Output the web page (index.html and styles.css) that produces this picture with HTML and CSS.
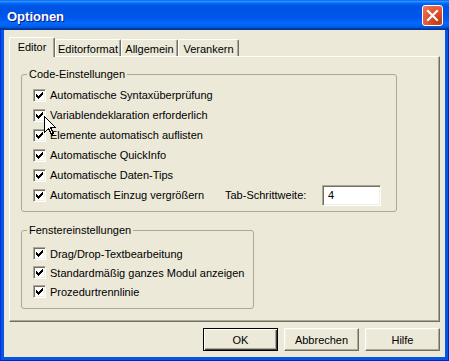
FILE: index.html
```html
<!DOCTYPE html>
<html lang="de">
<head>
<meta charset="utf-8">
<title>Optionen</title>
<link rel="stylesheet" href="styles.css">
</head>
<body>
<div class="window">
  <div class="titlebar">
    <span class="title">Optionen</span>
    <span class="close"><svg width="19" height="19" viewBox="0 0 19 19"><path d="M5 5 L14 14 M14 5 L5 14" stroke="#fff" stroke-width="2.2" stroke-linecap="square" fill="none"/></svg></span>
  </div>
  <div class="frame">
    <div class="client">
      <div class="tabs">
        <div class="tab active w1">Editor</div>
        <div class="tab w2">Editorformat</div>
        <div class="tab w3">Allgemein</div>
        <div class="tab w4">Verankern</div>
      </div>
      <div class="panel">
        <fieldset class="group g1">
          <legend>Code-Einstellungen</legend>
          <div class="row"><span class="cb"><svg width="11" height="11" viewBox="0 0 11 11"><path d="M2 4h1v3h-1z M3 5h1v3h-1z M4 6h1v3h-1z M5 5h1v3h-1z M6 4h1v3h-1z M7 3h1v3h-1z M8 2h1v3h-1z" fill="#000" shape-rendering="crispEdges"/></svg></span><span>Automatische Syntaxüberprüfung</span></div>
          <div class="row"><span class="cb"><svg width="11" height="11" viewBox="0 0 11 11"><path d="M2 4h1v3h-1z M3 5h1v3h-1z M4 6h1v3h-1z M5 5h1v3h-1z M6 4h1v3h-1z M7 3h1v3h-1z M8 2h1v3h-1z" fill="#000" shape-rendering="crispEdges"/></svg></span><span>Variablendeklaration erforderlich</span></div>
          <div class="row"><span class="cb"><svg width="11" height="11" viewBox="0 0 11 11"><path d="M2 4h1v3h-1z M3 5h1v3h-1z M4 6h1v3h-1z M5 5h1v3h-1z M6 4h1v3h-1z M7 3h1v3h-1z M8 2h1v3h-1z" fill="#000" shape-rendering="crispEdges"/></svg></span><span>Elemente automatisch auflisten</span></div>
          <div class="row"><span class="cb"><svg width="11" height="11" viewBox="0 0 11 11"><path d="M2 4h1v3h-1z M3 5h1v3h-1z M4 6h1v3h-1z M5 5h1v3h-1z M6 4h1v3h-1z M7 3h1v3h-1z M8 2h1v3h-1z" fill="#000" shape-rendering="crispEdges"/></svg></span><span>Automatische QuickInfo</span></div>
          <div class="row"><span class="cb"><svg width="11" height="11" viewBox="0 0 11 11"><path d="M2 4h1v3h-1z M3 5h1v3h-1z M4 6h1v3h-1z M5 5h1v3h-1z M6 4h1v3h-1z M7 3h1v3h-1z M8 2h1v3h-1z" fill="#000" shape-rendering="crispEdges"/></svg></span><span>Automatische Daten-Tips</span></div>
          <div class="row"><span class="cb"><svg width="11" height="11" viewBox="0 0 11 11"><path d="M2 4h1v3h-1z M3 5h1v3h-1z M4 6h1v3h-1z M5 5h1v3h-1z M6 4h1v3h-1z M7 3h1v3h-1z M8 2h1v3h-1z" fill="#000" shape-rendering="crispEdges"/></svg></span><span class="longlabel">Automatisch Einzug vergrößern</span><span class="tablabel">Tab-Schrittweite:</span><span class="input">4</span></div>
        </fieldset>
        <fieldset class="group g2">
          <legend>Fenstereinstellungen</legend>
          <div class="row"><span class="cb"><svg width="11" height="11" viewBox="0 0 11 11"><path d="M2 4h1v3h-1z M3 5h1v3h-1z M4 6h1v3h-1z M5 5h1v3h-1z M6 4h1v3h-1z M7 3h1v3h-1z M8 2h1v3h-1z" fill="#000" shape-rendering="crispEdges"/></svg></span><span>Drag/Drop-Textbearbeitung</span></div>
          <div class="row"><span class="cb"><svg width="11" height="11" viewBox="0 0 11 11"><path d="M2 4h1v3h-1z M3 5h1v3h-1z M4 6h1v3h-1z M5 5h1v3h-1z M6 4h1v3h-1z M7 3h1v3h-1z M8 2h1v3h-1z" fill="#000" shape-rendering="crispEdges"/></svg></span><span>Standardmäßig ganzes Modul anzeigen</span></div>
          <div class="row"><span class="cb"><svg width="11" height="11" viewBox="0 0 11 11"><path d="M2 4h1v3h-1z M3 5h1v3h-1z M4 6h1v3h-1z M5 5h1v3h-1z M6 4h1v3h-1z M7 3h1v3h-1z M8 2h1v3h-1z" fill="#000" shape-rendering="crispEdges"/></svg></span><span>Prozedurtrennlinie</span></div>
        </fieldset>
      </div>
      <div class="buttons">
        <span class="btn default">OK</span>
        <span class="btn">Abbrechen</span>
        <span class="btn">Hilfe</span>
      </div>
    </div>
  </div>
  <svg class="cursor" width="13" height="20" viewBox="0 0 13 20"><path d="M0.5 0.5 L0.5 16.5 L4.5 12.5 L7.5 18.5 L9.5 17.5 L6.5 11.5 L11.5 11.5 Z" fill="#fff" stroke="#000" stroke-width="1" shape-rendering="crispEdges"/></svg>
</div>
</body>
</html>
```
FILE: styles.css
```css
* { box-sizing: border-box; }
html, body { margin: 0; padding: 0; }
body {
  width: 449px;
  height: 361px;
  overflow: hidden;
  font-family: "Liberation Sans", Arial, sans-serif;
  font-size: 11px;
  color: #000;
  background: #fff;
}
.window {
  position: relative;
  width: 449px;
  height: 361px;
  display: flex;
  flex-direction: column;
}
.titlebar {
  height: 30px;
  flex: none;
  display: flex;
  align-items: center;
  justify-content: space-between;
  padding: 0 6px 0 7px;
  background: linear-gradient(to bottom, #0058ee 0%, #3593ff 4%, #288eff 6%, #127dff 8%, #036ffc 10%, #0262ee 14%, #0057e5 20%, #0054e3 24%, #0055eb 56%, #005bf5 66%, #026afe 76%, #0062ef 86%, #0052d6 92%, #0040ab 94%, #003092 100%);
}
.title {
  font-weight: bold;
  font-size: 13px;
  color: #fff;
  text-shadow: 1px 1px #0a1883;
  line-height: 15px;
  margin-top: 3px;
}
.close {
  width: 21px;
  height: 21px;
  margin-top: 1px;
  border: 1px solid #fff;
  border-radius: 3px;
  background: radial-gradient(circle at 80% 80%, #c23a12 0%, #e0502c 45%, #ee7a5a 100%);
  display: flex;
}
.frame {
  flex: 1;
  display: flex;
  padding: 0 4px 4px 4px;
  background: #0556e6;
  box-shadow: inset 1px 0 #0831d9, inset -1px 0 #0026b8, inset 0 -1px #0026b8;
}
.client {
  flex: 1;
  background: #ece9d8;
  padding: 7px 5px 6px 5px;
  display: flex;
  flex-direction: column;
}
.tabs {
  height: 19px;
  display: flex;
  align-items: flex-end;
  flex: none;
}
.tab {
  height: 17px;
  display: flex;
  align-items: center;
  justify-content: center;
  background: #ece9d8;
  border-top: 1px solid #fff;
  border-left: 1px solid #fff;
  border-right: 1px solid #716f64;
  box-shadow: inset -1px 0 #aca899;
  border-radius: 2px 2px 0 0;
  padding-top: 1px;
}
.tab.active {
  height: 20px;
  margin-bottom: -1px;
  position: relative;
  z-index: 1;
  padding-top: 0;
  padding-bottom: 2px;
}
.w1 { width: 46px; }
.w2 { width: 66px; }
.w3 { width: 57px; }
.w4 { width: 61px; }
.panel {
  height: 266px;
  flex: none;
  border: 1px solid;
  border-color: #fff #716f64 #716f64 #fff;
  box-shadow: inset -1px -1px #aca899;
  padding: 0 0 0 11px;
}
.group {
  margin: 0;
  min-inline-size: 0;
  border: 1px solid #aca899;
  border-radius: 3px;
  padding: 4px 0 6px 11px;
}
.group legend {
  margin-left: -6px;
  padding: 0 2px;
  line-height: 13px;
  background: #ece9d8;
}
.g1 {
  width: 376px;
  margin-top: 11px;
}
.g2 {
  width: 233px;
  margin-top: 12px;
  padding-top: 7px;
  padding-bottom: 7px;
}
.row {
  display: flex;
  align-items: center;
  height: 20px;
}
.g2 .row { height: 19px; }
.cb {
  width: 13px;
  height: 13px;
  flex: none;
  margin-right: 4px;
  background: #fff;
  border: 1px solid;
  border-color: #aca899 #fff #fff #aca899;
  box-shadow: inset 1px 1px #716f64, inset -1px -1px #f1efe2;
  display: flex;
}
.longlabel { width: 175px; flex: none; }
.tablabel { width: 97px; flex: none; }
.input {
  width: 59px;
  height: 21px;
  background: #fff;
  border: 1px solid;
  border-color: #aca899 #fff #fff #aca899;
  box-shadow: inset 1px 1px #716f64, inset -1px -1px #f1efe2;
  padding-left: 5px;
  display: flex;
  align-items: center;
}
.buttons {
  display: flex;
  justify-content: flex-end;
  gap: 6px;
  margin-top: 6px;
  flex: none;
}
.btn {
  width: 75px;
  height: 23px;
  display: flex;
  align-items: center;
  justify-content: center;
  background: #ece9d8;
  border: 1px solid;
  border-color: #fff #716f64 #716f64 #fff;
  box-shadow: inset -1px -1px #aca899, inset 1px 1px #f1efe2;
}
.btn.default {
  border-color: #000;
  box-shadow: inset 1px 1px #fff, inset -1px -1px #404040, inset -2px -2px #aca899;
}
.cursor {
  position: absolute;
  left: 44px;
  top: 116px;
}
```
